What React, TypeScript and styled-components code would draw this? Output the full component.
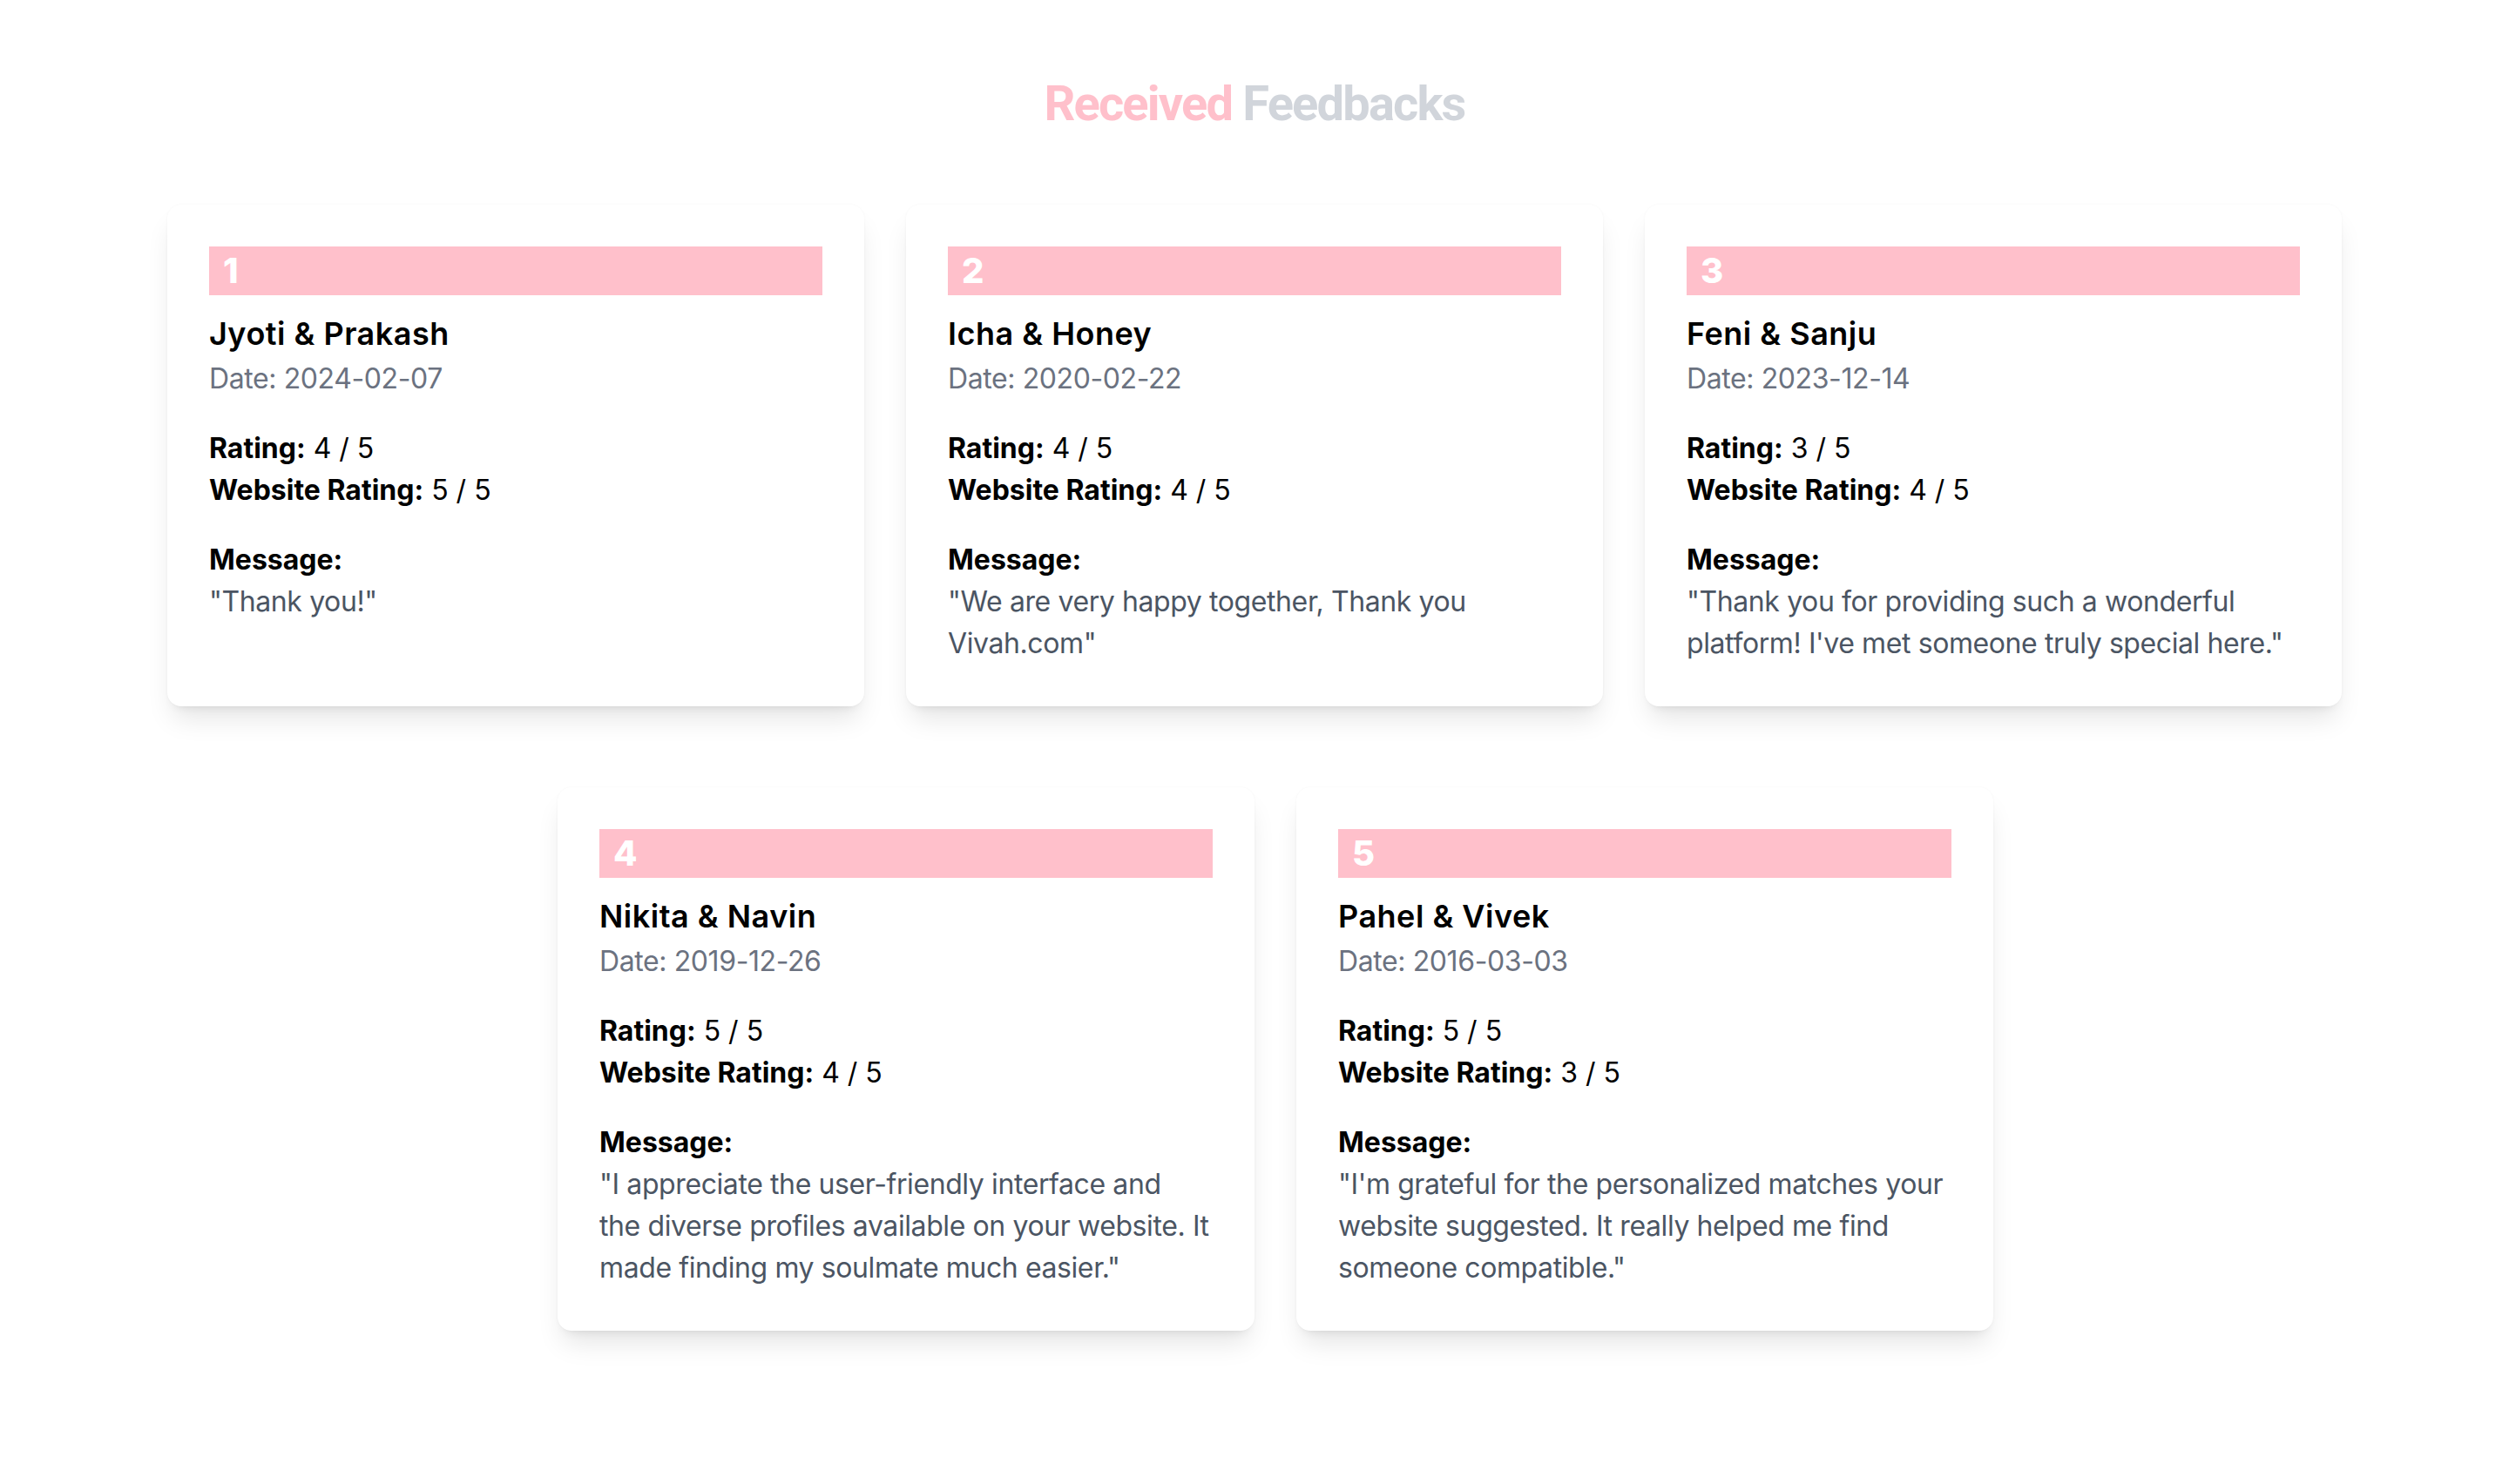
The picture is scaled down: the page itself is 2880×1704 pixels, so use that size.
import React from "react";
import styled, { createGlobalStyle } from "styled-components";

const GlobalStyle = createGlobalStyle`
  html, body { margin: 0; padding: 0; background: #ffffff; }
  body { font-family: Inter, Roboto, "Liberation Sans", sans-serif; color: #000; }
  * { box-sizing: border-box; }
`;

const Page = styled.main`
  padding: 87px 0 120px;
  display: flex;
  flex-direction: column;
  align-items: center;
`;

const Heading = styled.h1`
  margin: 0 0 84px;
  font-family: Roboto, Inter, "Liberation Sans", sans-serif;
  font-size: 56px;
  line-height: 64px;
  font-weight: 700;
  letter-spacing: -1.8px;
  text-align: center;
`;

const Tone = styled.span<{ $tone: "pink" | "gray" }>`
  color: ${(p) => (p.$tone === "pink" ? "#ffc0cb" : "#d1d5db")};
`;

const Rows = styled.div`
  display: flex;
  flex-direction: column;
  align-items: center;
  gap: 93px;
`;

const Row = styled.div<{ $shift?: boolean }>`
  display: flex;
  justify-content: center;
  align-items: stretch;
  gap: 48px;
  padding-left: ${(p) => (p.$shift ? "48px" : "0")};
`;

const Card = styled.article`
  width: 800px;
  padding: 48px;
  background: #ffffff;
  border-radius: 16px;
  box-shadow: 0 20px 30px -6px rgba(0, 0, 0, 0.1), 0 8px 12px -8px rgba(0, 0, 0, 0.1),
    0 0 3px rgba(0, 0, 0, 0.04);
  display: flex;
  flex-direction: column;
`;

const IndexBar = styled.div`
  height: 56px;
  background: #ffc0cb;
  color: #ffffff;
  font-size: 40px;
  line-height: 56px;
  font-weight: 800;
  padding-left: 16px;
`;

const Names = styled.h2`
  margin: 16px 0 0;
  font-size: 36px;
  line-height: 56px;
  font-weight: 600;
  letter-spacing: 0.5px;
  color: #000;
`;

const DateLine = styled.p`
  margin: 0;
  font-size: 32px;
  line-height: 48px;
  letter-spacing: -0.4px;
  color: #6b7280;
`;

const Block = styled.div`
  margin-top: 32px;
  font-size: 32px;
  line-height: 48px;
`;

const Line = styled.p`
  margin: 0;
  color: #000;
`;

const Label = styled.strong`
  font-weight: 700;
`;

const Quote = styled.p`
  margin: 0;
  color: #4b5563;
  letter-spacing: -0.4px;
`;

type Feedback = {
  names: string;
  date: string;
  rating: number;
  website: number;
  message: string;
};

const feedbacks: Feedback[] = [
  { names: "Jyoti & Prakash", date: "2024-02-07", rating: 4, website: 5, message: "Thank you!" },
  { names: "Icha & Honey", date: "2020-02-22", rating: 4, website: 4, message: "We are very happy together, Thank you Vivah.com" },
  {
    names: "Feni & Sanju",
    date: "2023-12-14",
    rating: 3,
    website: 4,
    message: "Thank you for providing such a wonderful platform! I've met someone truly special here.",
  },
  {
    names: "Nikita & Navin",
    date: "2019-12-26",
    rating: 5,
    website: 4,
    message:
      "I appreciate the user-friendly interface and the\u00a0diverse profiles available on your website. It made finding my soulmate much easier.",
  },
  {
    names: "Pahel & Vivek",
    date: "2016-03-03",
    rating: 5,
    website: 3,
    message: "I'm grateful for the personalized matches your website suggested. It really helped me find someone compatible.",
  },
];

function FeedbackCard({ f, index }: { f: Feedback; index: number }) {
  return (
    <Card>
      <IndexBar>{index}</IndexBar>
      <Names>{f.names}</Names>
      <DateLine>Date: {f.date}</DateLine>
      <Block>
        <Line>
          <Label>Rating:</Label> {f.rating} / 5
        </Line>
        <Line>
          <Label>Website Rating:</Label> {f.website} / 5
        </Line>
      </Block>
      <Block>
        <Line>
          <Label>Message:</Label>
        </Line>
        <Quote>"{f.message}"</Quote>
      </Block>
    </Card>
  );
}

export default function App() {
  return (
    <>
      <GlobalStyle />
      <Page>
        <Heading>
          <Tone $tone="pink">Received</Tone> <Tone $tone="gray">Feedbacks</Tone>
        </Heading>
        <Rows>
          <Row>
            {feedbacks.slice(0, 3).map((f, i) => (
              <FeedbackCard key={f.names} f={f} index={i + 1} />
            ))}
          </Row>
          <Row $shift>
            {feedbacks.slice(3).map((f, i) => (
              <FeedbackCard key={f.names} f={f} index={i + 4} />
            ))}
          </Row>
        </Rows>
      </Page>
    </>
  );
}
